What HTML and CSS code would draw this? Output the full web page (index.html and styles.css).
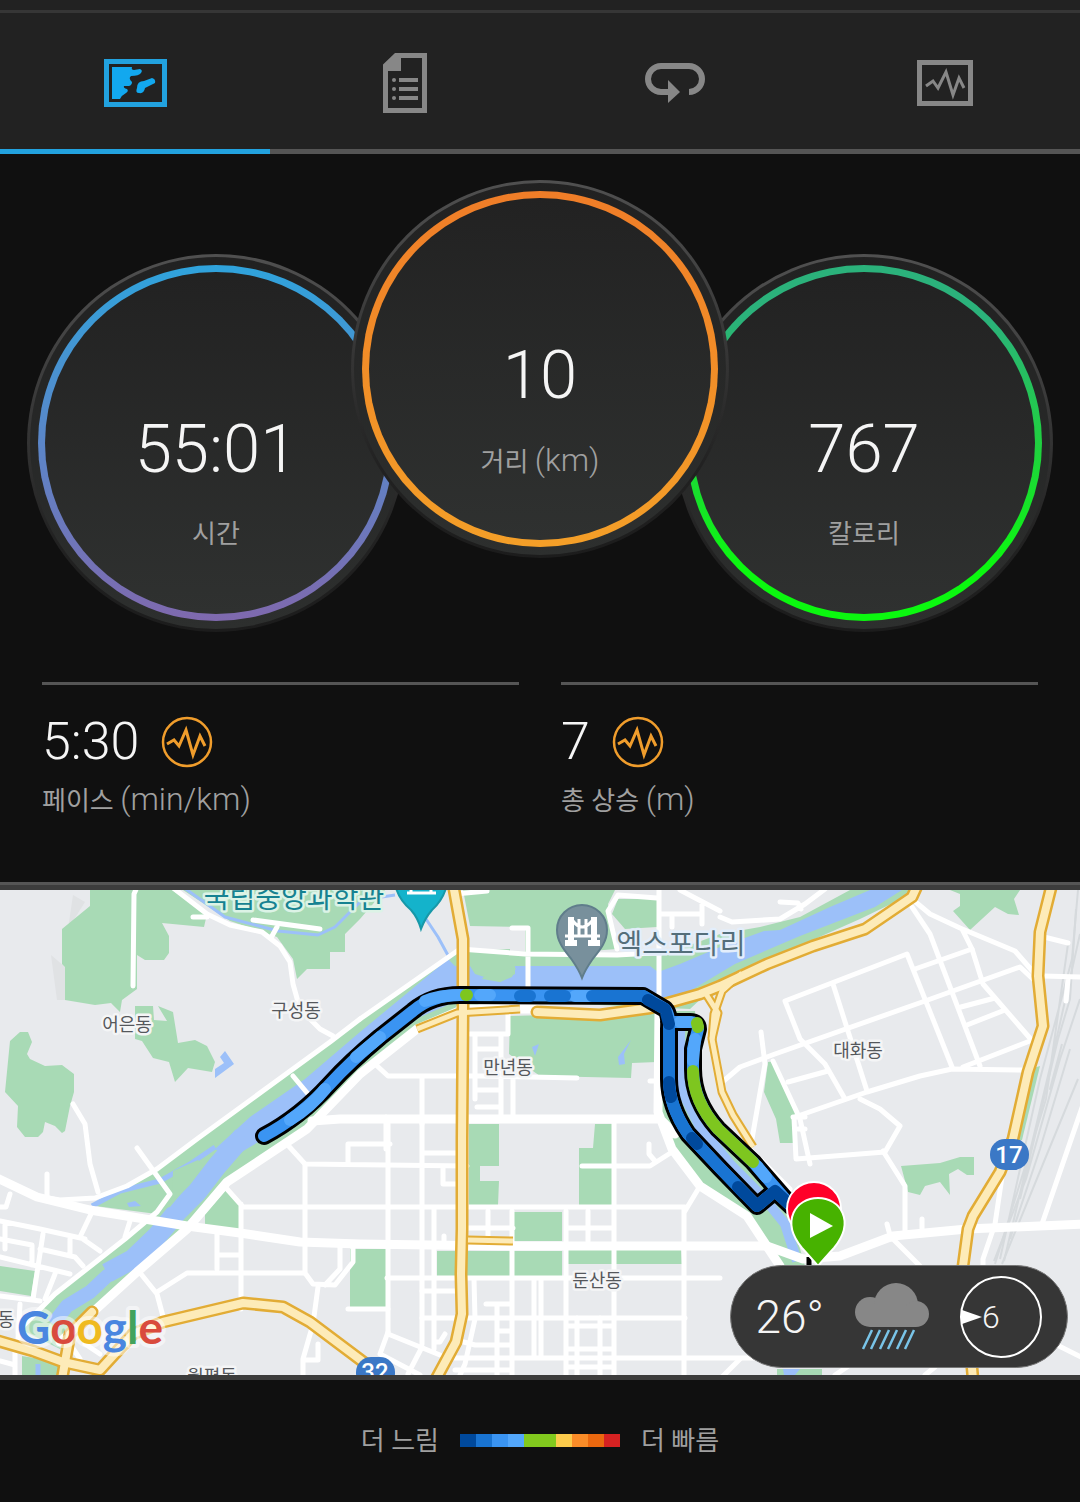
FILE: index.html
```html
<!DOCTYPE html>
<html lang="ko">
<head>
  <meta charset="UTF-8" />
  <meta name="viewport" content="width=device-width, initial-scale=1.0"/>
  <title>달리기</title>
  <link rel="stylesheet" href="styles.css">
</head>
<body>
  <nav class="tabs">
    <a class="tab active" href="#map" aria-label="지도">
      <svg width="64" height="50" viewBox="0 0 64 50">
        <rect x="3.500" y="3.500" width="58" height="43" fill="none" stroke="#22a2df" stroke-width="5"/>
        <path fill="#12a8ef" d="M9 9H29Q28 12 31 12L37 11Q40 12 38 15Q36 18 28 18Q25 20 29 24Q29 27 26 28L21 28Q20 30 24 31Q26 33 23 35Q19 37 17 41H9Z"/>
        <path fill="#12a8ef" d="M34 30Q34 23 41 23L49 20Q53 21 52 25L42 30Q41 36 36 35Q32 35 34 30Z"/>
      </svg>
    </a>
    <a class="tab" href="#details" aria-label="통계">
      <svg width="44" height="60" viewBox="0 0 44 60">
        <path fill="none" stroke="#878787" stroke-width="5" d="M2.500 12.500V57.500H41.500V2.500H13Z"/>
        <path fill="#878787" d="M0 13L13 0H18V18H0Z"/>
        <path stroke="#878787" stroke-width="4" d="M16 27H35M16 36H35M16 45H35"/>
        <g fill="#878787"><circle cx="11" cy="27" r="2"/><circle cx="11" cy="36" r="2"/><circle cx="11" cy="45" r="2"/></g>
      </svg>
    </a>
    <a class="tab" href="#laps" aria-label="랩">
      <svg width="60" height="42" viewBox="0 0 60 42">
        <path fill="none" stroke="#878787" stroke-width="6" d="M24 30H16A13 13 0 0 1 16 4H44A13 13 0 0 1 44 30"/>
        <path fill="#878787" d="M23 18L35 30L23 41Z"/>
      </svg>
    </a>
    <a class="tab" href="#charts" aria-label="차트">
      <svg width="58" height="46" viewBox="0 0 58 46">
        <rect x="3.500" y="2.500" width="51" height="41" fill="none" stroke="#878787" stroke-width="5"/>
        <path fill="none" stroke="#878787" stroke-width="3" d="M10 26L17 21L22 28L30 12L37 35L43 18L48 28"/>
      </svg>
    </a>
  </nav>

  <main>
    <section class="gauges">
      <div class="gauge time">
        <div class="ring">
          <span class="value">55:01</span>
          <span class="label">시간</span>
        </div>
      </div>
      <div class="gauge distance">
        <div class="ring">
          <span class="value">10</span>
          <span class="label">거리 <span class="unit">(km)</span></span>
        </div>
      </div>
      <div class="gauge calories">
        <div class="ring">
          <span class="value">767</span>
          <span class="label">칼로리</span>
        </div>
      </div>
    </section>

    <section class="stats">
      <div class="stat">
        <div class="stat-row">
          <span class="stat-value">5:30</span>
          <button class="chart-btn" aria-label="페이스 차트">
            <svg width="52" height="52" viewBox="0 0 52 52" fill="none" stroke="#f09d2c">
              <circle cx="26" cy="26" r="24" stroke-width="2.500"/>
              <path stroke-width="3" d="M6 28L13 24L18 30L25 14L32 39L39 20L44 30"/>
            </svg>
          </button>
        </div>
        <div class="label">페이스 <span class="unit">(min/km)</span></div>
      </div>
      <div class="stat">
        <div class="stat-row">
          <span class="stat-value">7</span>
          <button class="chart-btn" aria-label="총 상승 차트">
            <svg width="52" height="52" viewBox="0 0 52 52" fill="none" stroke="#f09d2c">
              <circle cx="26" cy="26" r="24" stroke-width="2.500"/>
              <path stroke-width="3" d="M6 28L13 24L18 30L25 14L32 39L39 20L44 30"/>
            </svg>
          </button>
        </div>
        <div class="label">총 상승 <span class="unit">(m)</span></div>
      </div>
    </section>

    <section class="map" id="map">
      <svg class="map-canvas" viewBox="0 891 1080 485">
        <defs>
          <g id="major">
            <path d="M453 885L463 940V1010L462 1140V1230L461 1275L462 1315L456 1343L436 1380"/>
            <path d="M537 1013L600 1016L650 1009L700 995L720 987L767 965L813 947L865 930L912 898L918 885"/>
            <path d="M1052 885L1040 933L1038 977L1043 1027L1028 1073L1013 1140L1000 1173L973 1217L968 1230L963 1267L973 1380"/>
            <path d="M-5 1341L33 1352L63 1363L100 1371L133 1335L163 1323L243 1304L283 1308L310 1323L370 1368"/>
            <path d="M92 1313L70 1335L62 1380"/>
          </g>
          <g id="minor">
            <path d="M742 974L722 992L714 1015L712 1040L722 1093L733 1116L753 1148"/>
            <path d="M706 995L718 1014L712 1040M417 1030L457 1014L520 1010M468 1241L513 1242"/>
          </g>
          <path id="route" d="M264 1137Q300 1118 330 1085Q350 1063 380 1038L413 1012Q432 996 460 996L643 997L665 1010Q670 1015 669 1030V1080Q669 1107 688 1135L720 1169L757 1207L775 1192L792 1208L753 1163L718 1130Q693 1102 693 1070V1050L698 1030Q698 1023 690 1023H669"/>
        </defs>

        <rect class="land" y="891" width="1080" height="485"/>
        <path class="shade" d="M73 896L85 903L68 930ZM51 956L65 968V1001H57Z"/>

        <!-- parks -->
        <g class="park">
          <path d="M90 891V907L62 930V965L65 968V1001L95 1006L111 1004L120 1013L122 1001L137 990V891Z"/>
          <path d="M137 891H172L207 915L204 928L162 924L169 937V954L164 961H145L137 956Z"/>
          <path d="M183 891H385L360 920L345 935V953H330V970H307L297 980L293 960L277 938L230 922Z"/>
          <path d="M135 1007H153L154 1021L167 1022L158 1007L173 1013L178 1044L195 1041L207 1047L215 1063L212 1073L188 1069L175 1083L169 1063L153 1059L142 1042L135 1040Z"/>
          <path d="M20 1033H28L32 1043L27 1055L30 1060L45 1067L62 1066L74 1075V1093L70 1107L65 1132L62 1134L55 1127L45 1123L43 1133L38 1138H25L17 1128L18 1107L5 1093L10 1042Z"/>
          <path d="M460 952L360 1022L205 1132L157 1170L95 1207L157 1215L125 1240L55 1295L20 1330L60 1350L137 1273L183 1230L227 1183L307 1130L360 1078L420 1030L465 1012L510 990V950Z"/>
          <path d="M463 891H615L608 905L617 950L525 957V928L470 927Z"/>
          <path d="M618 900H657V928L625 930L612 915Z"/>
          <path d="M465 951L660 957L720 935L760 928L800 918L850 891H920L860 920L720 982L690 1010L465 1000Z"/>
          <path d="M510 1017L657 1013V1063L632 1064L631 1079L540 1077L509 1055Z"/>
          <path d="M660 1012H695L700 1090L720 1130L760 1180L790 1215L805 1267H777L747 1217L700 1187L673 1153L658 1113Z"/>
          <path d="M768 1063L775 1062L797 1110L793 1144H780L776 1120L764 1093Z"/>
          <path d="M950 891L960 895V907L953 912L970 931L995 908L1008 915L1019 916L1014 900L1020 891Z"/>
          <path d="M901 1167L940 1164L960 1158H974V1176H967L958 1170L949 1175L950 1196L940 1183L925 1187L920 1196L908 1193Z"/>
          <path d="M1040 1067L1022 1141H1010L1030 1070Z"/>
          <path d="M469 1125H499V1167H480V1182H499L498 1206H469Z"/>
          <path d="M595 1125H612V1206H579V1149H593Z"/>
          <path d="M514 1213H562V1242H514ZM437 1252H562V1277H437ZM350 1250H386V1308H350ZM567 1251H681L682 1265H567Z"/>
          <path d="M227 1190L240 1207V1230L205 1228V1215Z"/>
          <path d="M0 1267L35 1272L31 1297L0 1292ZM22 1357L60 1363L57 1376H22ZM777 1370H822V1376H777Z"/>
        </g>

        <!-- river and ponds -->
        <g class="water">
          <path d="M448 960L455 967H470L475 975L500 983L515 975V967H650L658 973L680 965L720 948L764 932L780 931L830 908L870 891H902L875 908L800 937L735 965L690 992L685 1005L450 1005L420 1018L380 1048L340 1086L300 1118L250 1148L230 1160L215 1150L250 1118L305 1080L360 1033L400 1000Z"/>
          <path class="stream" stroke-width="20" d="M243 1137L217 1167L197 1193L177 1213L157 1237L133 1260L107 1274"/>
          <path class="stream" stroke-width="14" d="M133 1260L107 1277L90 1293L67 1307L53 1325"/>
          <path class="stream" stroke-width="5" d="M215 1148L190 1165L160 1182L120 1192L92 1207M38 1365V1380"/>
          <path class="stream" stroke-width="3" d="M183 888L225 918L278 932L318 936L335 928L362 901L395 896M426 920L438 938L450 960"/>
          <path class="stream" stroke-width="10" d="M680 1030L681 1090L700 1128L730 1165L765 1200L785 1225L797 1262"/>
          <path d="M225 1052L234 1065L215 1079V1070L224 1064L220 1058Z"/>
          <path d="M532 1048L539 1045L535 1057ZM619 1066L618 1058L631 1041L624 1055L625 1065ZM127 1204L135 1202L141 1207L129 1208Z"/>
          <path d="M783 1370H800L795 1376H784Z"/>
        </g>
        <path class="park" d="M173 1172L198 1161L204 1167L170 1208L152 1212L172 1196ZM488 973L516 969L512 978L500 983L482 980Z"/>

        <!-- railway -->
        <g class="rail">
          <path d="M1078 891L1072 960L1040 1080L1000 1260M1080 935L1052 1060L1004 1262M1068 945L1046 1100L995 1265"/>
          <path d="M1076 910L1070 1000L1058 1040L1020 1200M1080 1000L1060 1060L1026 1180L994 1262M1062 1045L1050 1090L1060 1060"/>
          <path d="M1070 1050L1040 1150L1010 1240M1078 1080L1045 1160L1002 1265"/>
        </g>

        <!-- streets -->
        <g class="street wide">
          <path d="M-5 1178L37 1198L90 1211L187 1227L240 1234L300 1243L360 1245L500 1247H767L803 1260L840 1257L893 1237L967 1230L1085 1225"/>
          <path d="M457 1013L417 1030L360 1075L307 1130L227 1183L187 1230L137 1273L60 1343"/>
          <path d="M312 1122L340 1120H660L675 1135M659 1012L658 1113L672 1150L700 1187L747 1217L780 1267"/>
          <path d="M537 1010H460"/>
        </g>
        <g class="street">
          <path d="M137 888L134 895L133 987M172 888L207 915L230 926L262 933L280 947L290 963L293 985L300 1010L320 1030L333 1037"/>
          <path d="M193 918H207M253 921L320 930M277 928L272 937M360 1020L330 1043L197 1140L157 1170L127 1187L95 1199L60 1201L30 1196"/>
          <path d="M360 1020L460 950L525 955L617 956L690 952M528 990V929H512M455 895L487 892M617 950L608 912L618 896L657 899M659 891V1010"/>
          <path d="M137 1149L170 1195L157 1213L125 1240L55 1295L20 1330M293 1077L308 1095M73 1105L85 1125L90 1165L98 1193M47 1175V1197"/>
          <path d="M720 918L732 923L780 920L805 905L825 890M780 903L798 904L801 910M680 891L720 912M660 915H702M702 905V925M672 918V928"/>
          <path d="M375 1065L388 1077H480L577 1079M422 1077V1125M388 1125V1335L440 1356M470 1035H508V1015M475 1050H500M475 1035V1100M501 1035V1120M477 1091H500M477 1108H500M513 1080V1120M650 1082H660"/>
          <path d="M422 1120V1345M386 1118V1150M285 1143L305 1165L467 1167M348 1165V1145H390M422 1154H460M443 1168V1185H460"/>
          <path d="M305 1165V1274L313 1285L335 1286L353 1263V1248M325 1286L340 1270V1248M227 1190L243 1208H685M241 1205V1310M217 1235V1270M217 1256H241"/>
          <path d="M141 1275L157 1295L165 1325M157 1293L187 1274H305M318 1288L313 1325L303 1360V1376M303 1361H318V1345M348 1310H388"/>
          <path d="M387 1279H720M422 1292H457M422 1319H685M450 1359H770M434 1210V1350M434 1343H440L445 1335M444 1237V1247"/>
          <path d="M488 1212V1242M588 1212V1242M465 1229H513M568 1229H612M512 1212V1376M566 1212V1376M614 1122V1376M684 1210V1376"/>
          <path d="M534 1280V1358M541 1280V1358M474 1280L475 1320L465 1365L460 1376M486 1305H510M497 1305V1376M500 1332H510M460 1342L475 1346H510M455 1371H510"/>
          <path d="M577 1319V1376M600 1319V1376M567 1327H612M567 1350H612M567 1368H612M388 1333L380 1355L420 1376M422 1348L408 1375"/>
          <path d="M582 1167H650L672 1153M655 1162L649 1155V1145M700 1187L685 1212M773 1062L800 1120L810 1165M685 1122H675"/>
          <path d="M912 908L930 935L980 1067M785 1002L907 955L952 1068M785 1002L800 1040L825 1065L845 1100M833 985L867 1092"/>
          <path d="M720 1085L740 1068L775 1055L925 1002L1020 968L1035 982M912 900L930 915L960 929L1015 952L1035 975M962 930L972 950L983 985L1035 1045"/>
          <path d="M915 970L972 950M961 1008L995 999M967 1026L1005 1011M963 1068L1030 1042M795 1118L867 1093L920 1077L952 1070L1025 1071"/>
          <path d="M788 1083L828 1072M761 1033L765 1065L752 1140L750 1150L790 1190M794 1119L796 1160L885 1153L900 1127L880 1110L860 1100"/>
          <path d="M805 1118L793 1118M798 1130H805M883 1152L905 1187V1235M887 1225L891 1240M922 1220V1235M893 1240L920 1267M1044 938L1068 944M1043 977L1085 978M1068 980L1066 1002"/>
          <path d="M1085 1100L1042 1225M1002 1178L995 1225L983 1260V1270M720 1380L740 1360M1055 1345L1085 1360M835 1376L850 1366M925 1376L935 1368"/>
          <path d="M92 1213L80 1238L100 1252M5 1225V1250M0 1222L40 1230L85 1240M0 1240L32 1246V1266M43 1235L33 1300M0 1258L70 1275M40 1250L75 1258L83 1267M70 1240V1257M0 1297L40 1302M55 1275L45 1300M20 1305L18 1340M10 1195L6 1208H-5M130 1222L125 1238"/>
          <path d="M15 1345V1376M70 1345L80 1360M85 1345L100 1355M0 1362L15 1366"/>
        </g>
        <use href="#major" class="major-edge"/>
        <use href="#minor" class="minor-edge"/>
        <use href="#major" class="major-fill"/>
        <use href="#minor" class="minor-fill"/>

        <!-- place names -->
        <g class="place">
          <text x="127" y="1032">어은동</text>
          <text x="296" y="1018">구성동</text>
          <text x="508" y="1075">만년동</text>
          <text x="858" y="1058">대화동</text>
          <text x="597" y="1288">둔산동</text>
          <text x="212" y="1384">월평동</text>
          <text x="6" y="1327">동</text>
        </g>
        <text class="poi museum" x="294" y="909">국립중앙과학관</text>
        <text class="poi bridge" x="681" y="955">엑스포다리</text>

        <!-- points of interest -->
        <path fill="#14b3cb" stroke="#1798a8" stroke-width="2" d="M395 885Q398 900 411 911Q418 919 421 930Q425 919 432 911Q444 900 447 885Z"/>
        <path fill="none" stroke="#fff" stroke-width="3" d="M407 894H436M411 893V888M431 893V888"/>
        <path fill="#78909c" stroke="#607d8b" stroke-width="2" d="M582 979Q579 971 572 961C566 953 557 944 557 931A25 25 0 0 1 607 931C607 944 598 953 592 961Q585 971 582 979Z"/>
        <path fill="none" stroke="#fff" stroke-width="6" d="M571 918V946M594 918V946M565 944H577M588 944H600"/>
        <path fill="none" stroke="#fff" stroke-width="3" d="M565 937H600M573 922Q582 934 592 922M579 920V936M586 920V936"/>

        <!-- road shields -->
        <g class="shield">
          <rect x="990" y="1140" width="39" height="31" rx="15"/>
          <text x="1009" y="1164">17</text>
          <rect x="356" y="1358" width="39" height="31" rx="15"/>
          <text x="375" y="1381">32</text>
        </g>

        <!-- run track coloured by pace -->
        <path stroke="#000" stroke-width="5" d="M809 1258V1270"/>
        <use href="#route" class="route-edge"/>
        <g class="route">
          <use href="#route" stroke="#3a94f2"/>
          <path stroke="#53a7fb" d="M290 1121Q312 1107 325 1090M356 1058L380 1038M425 1002Q440 996 460 996M480 996H490M575 997H590"/>
          <path stroke="#7ec61f" d="M466 996H467"/>
          <path stroke="#1974d2" d="M520 997H530M550 997H565M592 997H643L650 1001M669 1030V1080Q669 1107 688 1135L720 1169L745 1195"/>
          <path stroke="#53a7fb" d="M680 1023H690M695 1040L693 1062M757 1167L766 1178"/>
          <path stroke="#00499c" d="M648 1001L665 1010L669 1025M669 1083Q669 1090 671 1098M692 1139L697 1145M738 1188L757 1207L775 1192L788 1204"/>
          <path stroke="#7ec61f" d="M697 1024L698 1028M693 1072Q693 1102 718 1130L753 1163"/>
        </g>

        <!-- finish and start -->
        <circle cx="814" cy="1210" r="27" fill="#ff0029" stroke="#fff" stroke-width="2"/>
        <path fill="#47b200" stroke="#fff" stroke-width="2" d="M818 1267Q812 1260 802 1249C780 1222 796 1199 818 1199S856 1222 834 1249Q824 1260 818 1267Z"/>
        <path fill="#fff" d="M810 1214L833 1227L810 1239Z"/>

        <text class="google" x="17" y="1345"><tspan fill="#4a86e0">G</tspan><tspan fill="#d94b3d">o</tspan><tspan fill="#efba1f">o</tspan><tspan fill="#4a86e0">g</tspan><tspan fill="#43a35c">l</tspan><tspan fill="#d94b3d">e</tspan></text>
      </svg>

      <div class="weather">
        <span class="temp">26°</span>
        <svg width="76" height="70" viewBox="0 0 76 70">
          <g fill="#878787"><circle cx="16" cy="30" r="15"/><circle cx="42" cy="23" r="22"/><circle cx="62" cy="32" r="13"/><rect x="16" y="25" width="46" height="20"/></g>
          <path stroke="#79c4e8" stroke-width="2.500" d="M18 48L9 67M26 48L17 67M35 48L26 67M43 48L34 67M52 48L43 67M60 48L51 67"/>
        </svg>
        <div class="wind">
          <svg width="20" height="14" viewBox="0 0 20 14"><path fill="#fff" d="M0 0L20 7L0 14Z"/></svg>
          <span>6</span>
        </div>
      </div>
    </section>
  </main>

  <footer class="legend">
    <span class="label">더 느림</span>
    <div class="scale">
      <i class="s1"></i><i class="s2"></i><i class="s3"></i><i class="s4"></i><i class="s5"></i><i class="s5"></i><i class="s6"></i><i class="s7"></i><i class="s8"></i><i class="s9"></i>
    </div>
    <span class="label">더 빠름</span>
  </footer>
</body>
</html>
```
FILE: styles.css
```css
* {
  box-sizing: border-box;
}

body {
  margin: 0;
  background-color: #101010;
  color: #f5f5f5;
  font-family: Roboto, "Noto Sans CJK KR", sans-serif;
  font-weight: 300;
}

svg {
  display: block;
}

/* tabs */
.tabs {
  display: grid;
  grid-template-columns: repeat(4, 1fr);
  border-top: 10px solid #222;
  background-color: #222;
  box-shadow: inset 0 3px #363636;
}

.tab {
  display: flex;
  align-items: center;
  justify-content: center;
  height: 144px;
  padding-top: 6px;
  border-bottom: 5px solid #555;
}

.tab.active {
  border-color: #22a2df;
}

/* gauges */
.gauges {
  display: flex;
  justify-content: center;
  align-items: flex-end;
  padding: 26px 0 50px;
}

.gauge {
  width: 35%;
  aspect-ratio: 1;
  padding: 8px;
  border: 3px solid transparent;
  border-radius: 50%;
  background: linear-gradient(#212121, #2d2f2e) padding-box,
    linear-gradient(#505050, #333 50%, #222 75%, #1c1c1c) border-box;
}

.gauge.distance {
  position: relative;
  z-index: 1;
  margin: 0 -5% 74px;
}

.ring {
  display: flex;
  flex-direction: column;
  align-items: center;
  height: 100%;
  padding-top: 137px;
  border: 7px solid transparent;
  border-radius: 50%;
}

.time .ring {
  background: linear-gradient(#222, #2f3130) padding-box,
    linear-gradient(#2fa3dc, #5b86c8 50%, #7f69ae) border-box;
}

.distance .ring {
  background: linear-gradient(#222, #2f3130) padding-box,
    linear-gradient(#ef7d28, #f49f28) border-box;
}

.calories .ring {
  background: linear-gradient(#222, #2f3130) padding-box,
    linear-gradient(#2bb27b 15%, #20d040 50%, #0bf80f 85%) border-box;
}

.value {
  font-size: 67px;
  line-height: 80px;
}

.label {
  color: #a0a0a0;
  font-size: 26px;
  font-weight: 400;
  line-height: 40px;
}

.gauge .label {
  margin-top: 25px;
}

.unit {
  font-size: 32px;
  font-weight: 300;
}

/* stats */
.stats {
  display: grid;
  grid-template-columns: 1fr 1fr;
  gap: 42px;
  padding: 0 42px 61px;
}

.stat {
  border-top: 3px solid #555;
  padding-top: 30px;
}

.stat-row {
  display: flex;
  align-items: center;
  gap: 22px;
}

.stat-value {
  font-size: 52px;
  line-height: 54px;
}

.chart-btn {
  padding: 0;
  border: none;
  background: none;
  cursor: pointer;
}

.stat .label {
  margin-top: 10px;
}

/* map */
.map {
  position: relative;
  border-top: 3px solid #555;
  border-bottom: 5px solid #3c3c3c;
}

.map-canvas {
  width: 100%;
  height: auto;
  border-top: 5px solid #3c3c3c;
}

.land {
  fill: #e8eaed;
}

.shade {
  fill: #e0e2e4;
}

.park {
  fill: #a8dab5;
}

.water {
  fill: #9cc0f9;
}

.stream,
.rail,
.street,
.major-edge,
.major-fill,
.minor-edge,
.minor-fill,
.route,
.route-edge {
  fill: none;
  stroke-linejoin: round;
}

.stream {
  stroke: #9cc0f9;
}

.rail {
  stroke: #d6dadd;
  stroke-width: 2;
}

.street {
  stroke: #fff;
  stroke-width: 5;
  stroke-linecap: round;
}

.street.wide {
  stroke-width: 9;
}

.major-edge {
  stroke: #e2ac35;
  stroke-width: 13;
  stroke-linecap: round;
}

.major-fill {
  stroke: #fdebb8;
  stroke-width: 8;
  stroke-linecap: round;
}

.minor-edge {
  stroke: #e2ac35;
  stroke-width: 9;
}

.minor-fill {
  stroke: #fdebb8;
  stroke-width: 5;
}

.route-edge {
  stroke: #000;
  stroke-width: 18;
  stroke-linecap: round;
}

.route {
  stroke-width: 12;
  stroke-linecap: round;
}

.place,
.poi {
  text-anchor: middle;
  stroke: #f4f5f6;
  stroke-width: 5;
  stroke-linejoin: round;
  paint-order: stroke;
}

.place {
  fill: #55585c;
  font-size: 18px;
  font-weight: 400;
}

.poi {
  font-size: 28px;
  font-weight: 400;
}

.museum {
  fill: #168291;
  stroke: #dcf3e6;
}

.bridge {
  fill: #546e7a;
  stroke: #e3eefb;
}

.shield {
  fill: #3b78c6;
}

.shield text {
  fill: #fff;
  font-size: 24px;
  font-weight: 500;
  text-anchor: middle;
}

.google {
  font-family: Lato, sans-serif;
  font-size: 46px;
  font-weight: 700;
  stroke: rgba(255, 255, 255, 0.5);
  stroke-width: 8;
  stroke-linejoin: round;
  paint-order: stroke;
}

.weather {
  position: absolute;
  right: 12px;
  bottom: 7px;
  display: flex;
  align-items: center;
  gap: 30px;
  height: 103px;
  padding: 0 25px;
  border: 1px solid #777;
  border-radius: 52px;
  background-color: #363636;
}

.temp {
  font-size: 46px;
}

.wind {
  display: flex;
  align-items: center;
  width: 82px;
  height: 82px;
  border: 2px solid #fff;
  border-radius: 50%;
  font-size: 32px;
}

/* legend */
.legend {
  display: flex;
  align-items: center;
  justify-content: center;
  gap: 21px;
  height: 121px;
}

.scale {
  display: flex;
}

.scale i {
  width: 16px;
  height: 13px;
}

.s1 { background-color: #00499c; }
.s2 { background-color: #1974d2; }
.s3 { background-color: #3a94f2; }
.s4 { background-color: #53a7fb; }
.s5 { background-color: #82c91e; }
.s6 { background-color: #fccb4c; }
.s7 { background-color: #fa8c28; }
.s8 { background-color: #eb680f; }
.s9 { background-color: #d62222; }
```
